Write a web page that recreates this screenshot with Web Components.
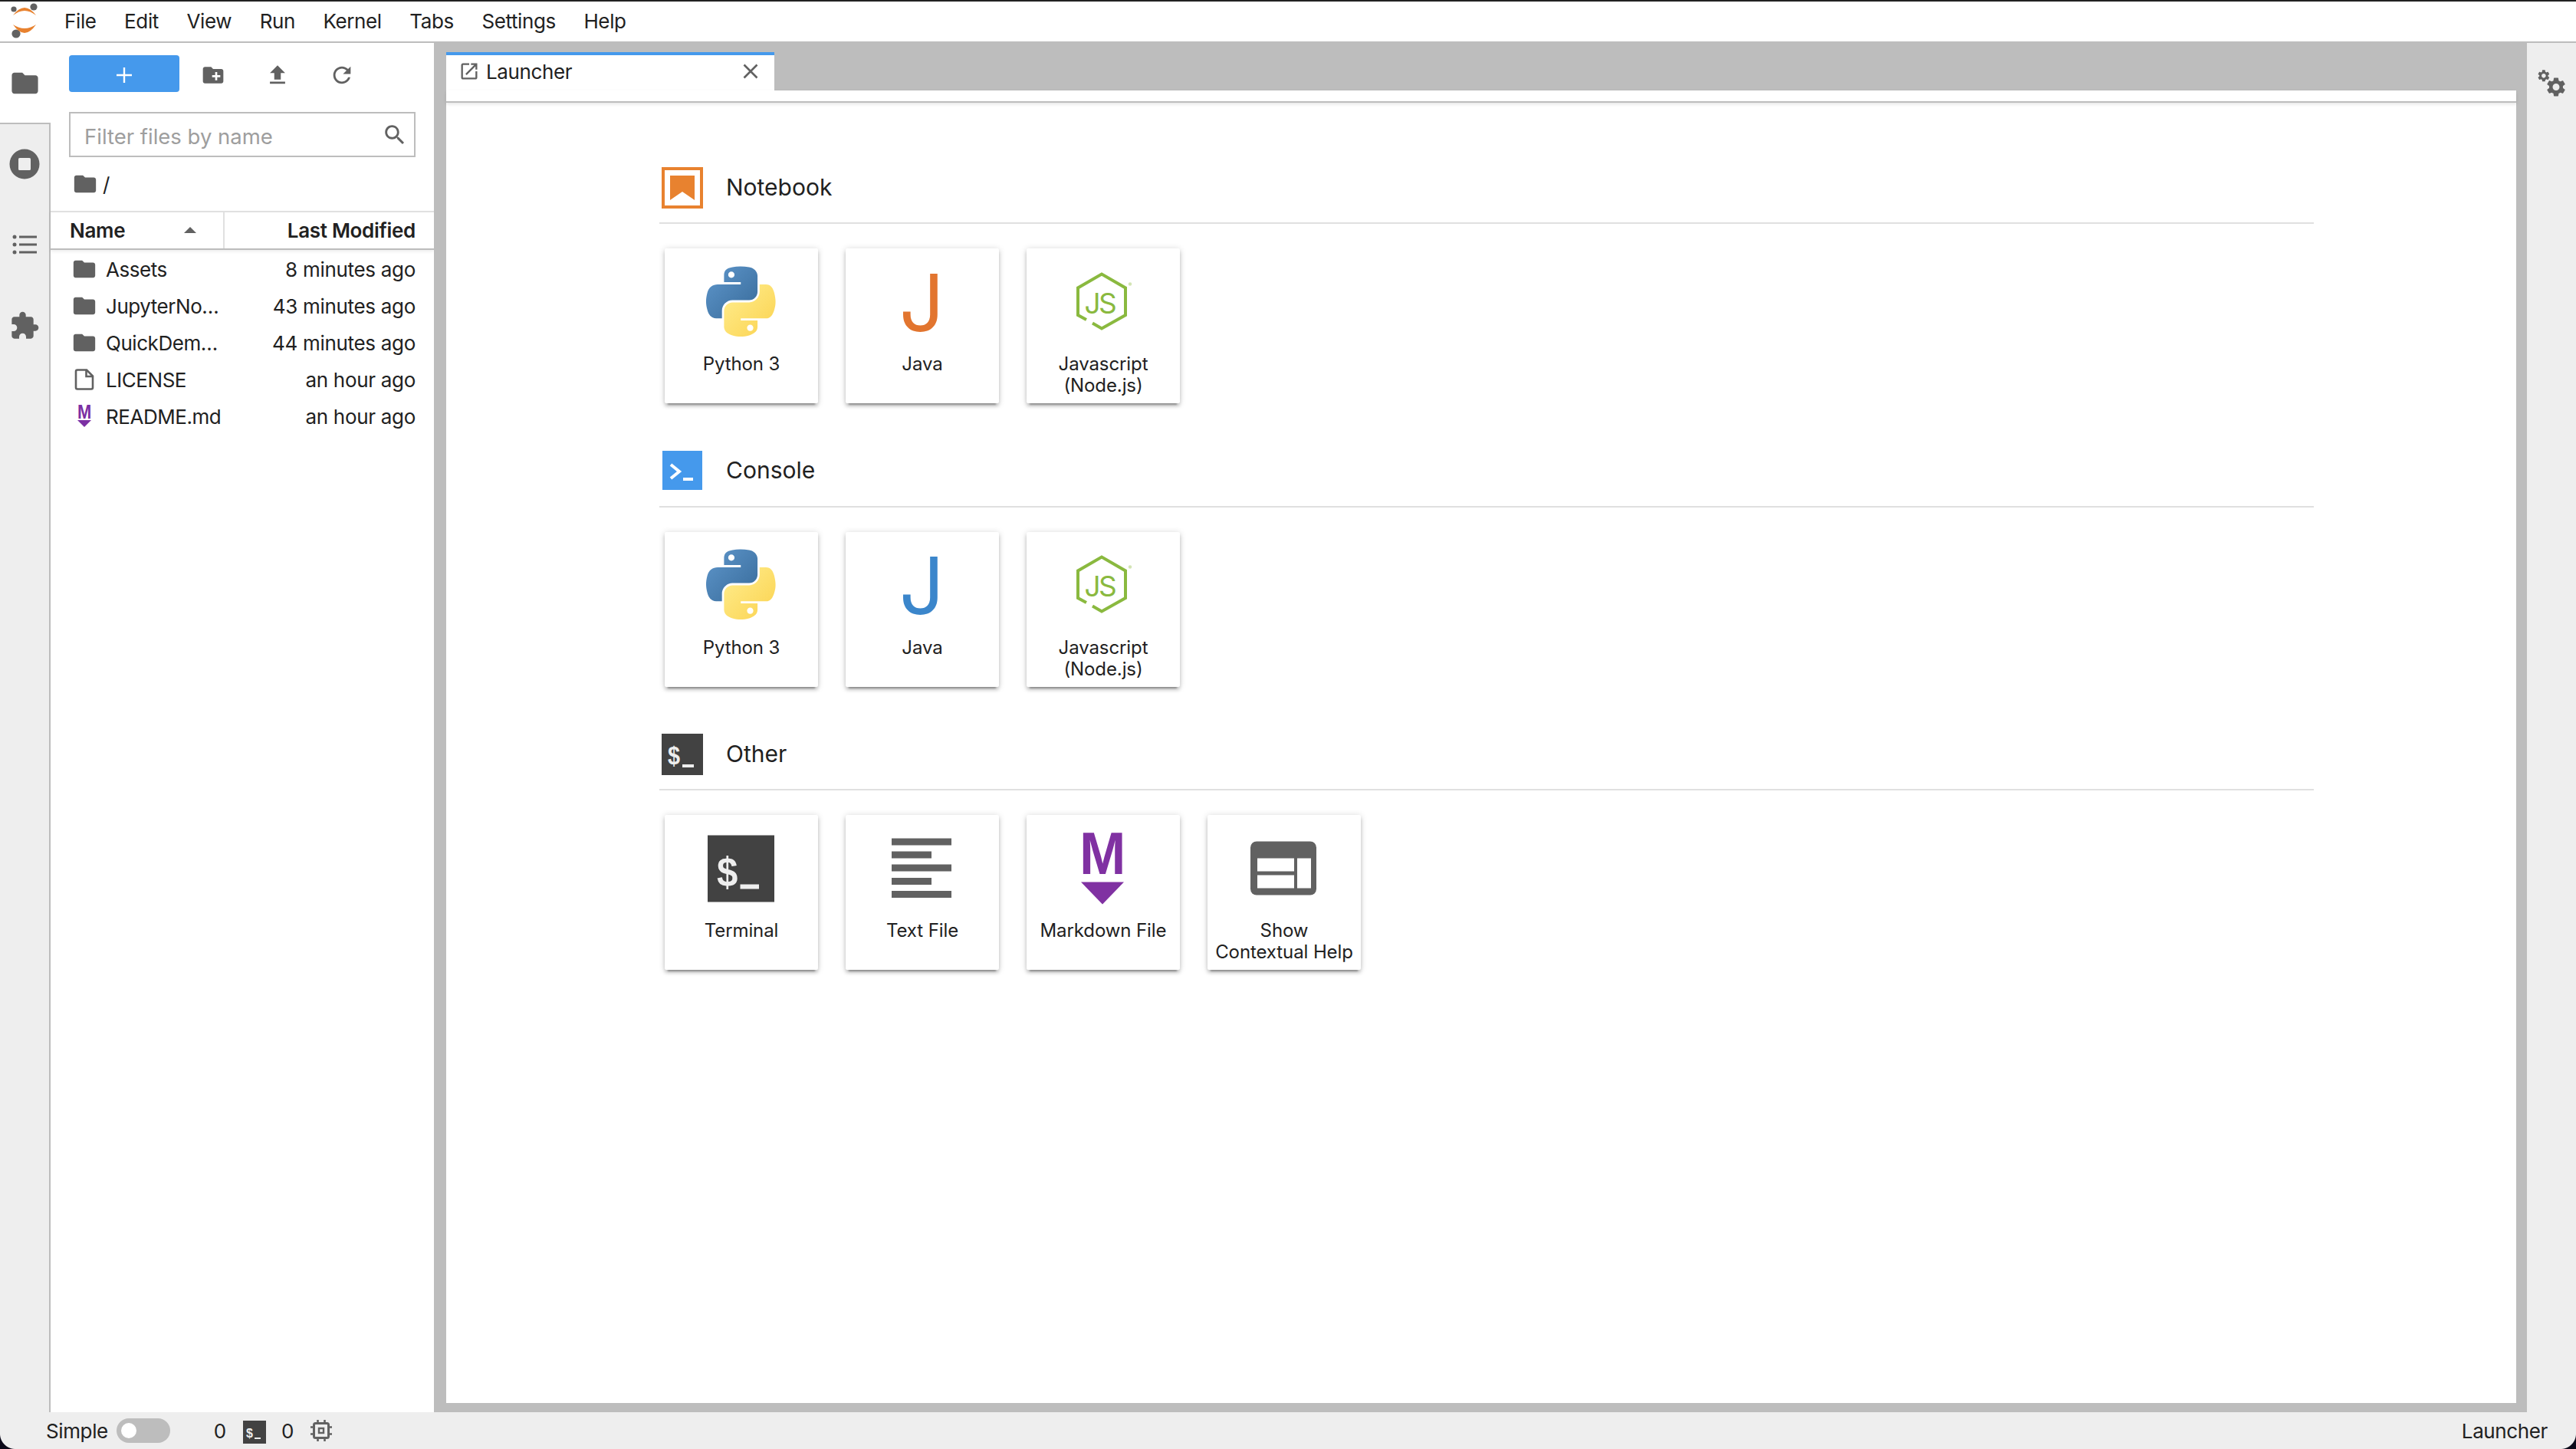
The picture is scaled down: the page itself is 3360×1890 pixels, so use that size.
<!DOCTYPE html>
<html lang="en">
<head>
<meta charset="UTF-8" />
<title>JupyterLab</title>
<style>
	html, body { margin: 0; padding: 0; background: #fff; }
	body { font-family: Inter, "Liberation Sans", sans-serif; color: #212121; letter-spacing: -.38px; }
</style>
</head>
<body>
<jl-app>
	<jl-menubar slot="top">
		<jl-menu-item>File</jl-menu-item>
		<jl-menu-item>Edit</jl-menu-item>
		<jl-menu-item>View</jl-menu-item>
		<jl-menu-item>Run</jl-menu-item>
		<jl-menu-item>Kernel</jl-menu-item>
		<jl-menu-item>Tabs</jl-menu-item>
		<jl-menu-item>Settings</jl-menu-item>
		<jl-menu-item>Help</jl-menu-item>
	</jl-menubar>

	<jl-left-rail slot="left"></jl-left-rail>

	<jl-filebrowser slot="left">
		<jl-file-row icon="folder" name="Assets" modified="8 minutes ago"></jl-file-row>
		<jl-file-row icon="folder" name="JupyterNo…" modified="43 minutes ago"></jl-file-row>
		<jl-file-row icon="folder" name="QuickDem…" modified="44 minutes ago"></jl-file-row>
		<jl-file-row icon="file" name="LICENSE" modified="an hour ago"></jl-file-row>
		<jl-file-row icon="mdsmall" name="README.md" modified="an hour ago"></jl-file-row>
	</jl-filebrowser>

	<jl-dock slot="center">
		<jl-section heading="Notebook" icon="hnotebook">
			<jl-card icon="python">Python 3</jl-card>
			<jl-card icon="javaorange">Java</jl-card>
			<jl-card icon="nodejs">Javascript<br />(Node.js)</jl-card>
		</jl-section>
		<jl-section heading="Console" icon="hconsole">
			<jl-card icon="python">Python 3</jl-card>
			<jl-card icon="javablue">Java</jl-card>
			<jl-card icon="nodejs">Javascript<br />(Node.js)</jl-card>
		</jl-section>
		<jl-section heading="Other" icon="hterminal">
			<jl-card icon="terminal">Terminal</jl-card>
			<jl-card icon="textfile">Text File</jl-card>
			<jl-card icon="markdown">Markdown File</jl-card>
			<jl-card icon="help">Show<br />Contextual Help</jl-card>
		</jl-section>
	</jl-dock>

	<jl-right-rail slot="right"></jl-right-rail>

	<jl-statusbar slot="bottom"></jl-statusbar>
</jl-app>

<script>
const GREY = '#616161';

// every icon lives in its own shadow root, so gradient ids can't clash
const ICONS = {
	logo: `<svg viewBox="0 0 64 52"><circle cx="18" cy="12" r="3.6" fill="#616161"/><circle cx="44" cy="9" r="4.6" fill="#616161"/><circle cx="21" cy="44" r="5.6" fill="#616161"/><path d="M17 20Q32 0 47 20Q32 8 17 20Z" fill="#e8822f"/><path d="M17 32Q32 54 47 32Q32 42 17 32Z" fill="#e8822f"/></svg>`,
	folder: `<svg viewBox="0 0 24 24"><path fill="${GREY}" d="M10 4H4c-1.1 0-1.99.9-1.99 2L2 18c0 1.1.9 2 2 2h16c1.1 0 2-.9 2-2V8c0-1.1-.9-2-2-2h-8l-2-2z"/></svg>`,
	newfolder: `<svg viewBox="0 0 24 24"><path fill="${GREY}" d="M20 6h-8l-2-2H4c-1.11 0-1.99.89-1.99 2L2 18c0 1.11.89 2 2 2h16c1.11 0 2-.89 2-2V8c0-1.11-.89-2-2-2zm-1 8h-3v3h-2v-3h-3v-2h3V9h2v3h3v2z"/></svg>`,
	upload: `<svg viewBox="0 0 24 24"><path fill="${GREY}" d="M9 16h6v-6h4l-7-7-7 7h4zm-4 2h14v2H5z"/></svg>`,
	refresh: `<svg viewBox="0 0 24 24"><path fill="${GREY}" d="M17.65 6.35C16.2 4.9 14.21 4 12 4c-4.42 0-7.99 3.58-7.99 8s3.57 8 7.99 8c3.73 0 6.84-2.55 7.73-6h-2.08c-.82 2.33-3.04 4-5.65 4-3.31 0-6-2.69-6-6s2.69-6 6-6c1.66 0 3.14.69 4.22 1.78L13 11h7V4l-2.35 2.35z"/></svg>`,
	search: `<svg viewBox="0 0 24 24"><path fill="${GREY}" d="M15.5 14h-.79l-.28-.27C15.41 12.59 16 11.11 16 9.5 16 5.91 13.09 3 9.5 3S3 5.91 3 9.5 5.91 16 9.5 16c1.61 0 3.09-.59 4.23-1.57l.27.28v.79l5 4.99L20.49 19l-4.99-5zm-6 0C7.01 14 5 11.99 5 9.5S7.01 5 9.5 5 14 7.01 14 9.5 11.99 14 9.5 14z"/></svg>`,
	launcher: `<svg viewBox="0 0 24 24"><path fill="${GREY}" d="M19 19H5V5h7V3H5c-1.11 0-2 .9-2 2v14c0 1.1.89 2 2 2h14c1.1 0 2-.9 2-2v-7h-2v7zM14 3v2h3.59l-9.83 9.83 1.41 1.41L19 6.41V10h2V3h-7z"/></svg>`,
	close: `<svg viewBox="0 0 24 24"><path d="M3.5 3.5L20.5 20.5M20.5 3.5L3.5 20.5" stroke="${GREY}" stroke-width="2.6" fill="none"/></svg>`,
	stop: `<svg viewBox="0 0 40 40"><path fill="${GREY}" fill-rule="evenodd" d="M20 .5a19.5 19.5 0 1 0 0 39a19.5 19.5 0 1 0 0-39zM13.5 12h13a1.5 1.5 0 0 1 1.5 1.5v13a1.5 1.5 0 0 1-1.5 1.5h-13a1.5 1.5 0 0 1-1.5-1.5v-13a1.5 1.5 0 0 1 1.5-1.5z"/></svg>`,
	list: `<svg viewBox="0 0 40 40"><g fill="${GREY}"><circle cx="7" cy="10" r="2.5"/><circle cx="7" cy="20" r="2.5"/><circle cx="7" cy="30" r="2.5"/><rect x="13" y="8.5" width="23" height="3"/><rect x="13" y="18.5" width="23" height="3"/><rect x="13" y="28.5" width="23" height="3"/></g></svg>`,
	puzzle: `<svg viewBox="0 0 24 24"><path fill="${GREY}" d="M20.5 11H19V7c0-1.1-.9-2-2-2h-4V3.5C13 2.12 11.88 1 10.5 1S8 2.12 8 3.5V5H4c-1.1 0-1.99.9-1.99 2v3.8H3.5c1.49 0 2.7 1.21 2.7 2.7s-1.21 2.7-2.7 2.7H2V20c0 1.1.9 2 2 2h3.8v-1.5c0-1.49 1.21-2.7 2.7-2.7 1.49 0 2.7 1.21 2.7 2.7V22H17c1.1 0 2-.9 2-2v-4h1.5c1.38 0 2.5-1.12 2.5-2.5S21.88 11 20.5 11z"/></svg>`,
	gears: `<svg viewBox="0 0 48 48"><defs><path id="g" fill="${GREY}" d="M19.14 12.94c.04-.3.06-.61.06-.94 0-.32-.02-.64-.07-.94l2.03-1.58a.49.49 0 0 0 .12-.61l-1.92-3.32a.488.488 0 0 0-.59-.22l-2.39.96c-.5-.38-1.03-.7-1.62-.94l-.36-2.54a.484.484 0 0 0-.48-.41h-3.84c-.24 0-.43.17-.47.41l-.36 2.54c-.59.24-1.13.57-1.62.94l-2.39-.96c-.22-.08-.47 0-.59.22L2.74 8.87c-.12.21-.08.47.12.61l2.03 1.58c-.05.3-.09.63-.09.94s.02.64.07.94l-2.03 1.58a.49.49 0 0 0-.12.61l1.92 3.32c.12.22.37.29.59.22l2.39-.96c.5.38 1.03.7 1.62.94l.36 2.54c.05.24.24.41.48.41h3.84c.24 0 .44-.17.47-.41l.36-2.54c.59-.24 1.13-.56 1.62-.94l2.39.96c.22.08.47 0 .59-.22l1.92-3.32c.12-.22.07-.47-.12-.61l-2.01-1.58zM12 15.6c-1.98 0-3.6-1.62-3.6-3.6s1.62-3.6 3.6-3.6 3.6 1.62 3.6 3.6-1.62 3.6-3.6 3.6z"/></defs><use href="#g" transform="translate(4.5 5.5) scale(.78)"/><use href="#g" transform="translate(15 14.5) scale(1.25)"/></svg>`,
	file: `<svg viewBox="0 0 34 34"><g fill="none" stroke="${GREY}" stroke-width="2.6"><path d="M6 6.5a2 2 0 0 1 2-2H20L28 12.5V27.5a2 2 0 0 1-2 2H8a2 2 0 0 1-2-2Z"/><path d="M19.5 4.5V13H28"/></g></svg>`,
	mdsmall: `<svg viewBox="0 0 34 34"><text x="8" y="20" font-family="Liberation Sans" font-weight="700" font-size="25" fill="#7b2fa3" textLength="18" lengthAdjust="spacingAndGlyphs">M</text><path d="M8 22H26L17 31Z" fill="#7b2fa3"/></svg>`,
	hnotebook: `<svg viewBox="0 0 54 54"><rect x="2" y="2" width="50" height="50" fill="#fff" stroke="#e8822f" stroke-width="4"/><path d="M11 11H43V43L27 32L11 43Z" fill="#e8822f"/></svg>`,
	hconsole: `<svg viewBox="0 0 54 54"><rect x="1" y="0" width="52" height="51" fill="#4599ec"/><path d="M12 18L23 27L12 36" fill="none" stroke="#fff" stroke-width="4"/><rect x="28" y="35" width="13" height="4" fill="#fff"/></svg>`,
	hterminal: `<svg viewBox="0 0 54 54"><rect width="54" height="54" fill="#424242"/><text x="8" y="40" font-family="Liberation Sans" font-weight="700" font-size="33" fill="#eee" textLength="16" lengthAdjust="spacingAndGlyphs">$</text><rect x="27" y="40" width="15" height="4" fill="#eee"/></svg>`,
	python: `<svg viewBox="-6 -6.5 104 104"><defs>
		<linearGradient id="pb" x1="0" y1="0" x2="1" y2="1"><stop offset="0" stop-color="#5f97cc"/><stop offset="1" stop-color="#376a99"/></linearGradient>
		<linearGradient id="py" x1="0" y1="0" x2="1" y2="1"><stop offset="0" stop-color="#ffee90"/><stop offset="1" stop-color="#fbd24e"/></linearGradient>
	</defs><g transform="scale(.815)">
		<path fill="url(#pb)" d="M54.9 0C50.3 0 46 .4 42.1 1.1C30.8 3.1 28.7 7.3 28.7 15V25.3H55.5V28.7H18.6C10.8 28.7 4 33.3 1.9 42.3C-.6 52.5-.7 58.8 1.9 69.4C3.8 77.4 8.3 83 16.1 83H25.4V70.8C25.4 61.9 33 54.1 42.1 54.1H68.9C76.3 54.1 82.3 48 82.3 40.5V15C82.3 7.8 76.2 2.3 68.9 1.1C64.3.3 59.5 0 54.9 0ZM40.4 8.2C43.2 8.2 45.5 10.5 45.5 13.3C45.5 16.2 43.2 18.4 40.4 18.4C37.6 18.4 35.4 16.2 35.4 13.3C35.4 10.5 37.6 8.2 40.4 8.2Z"/>
		<path fill="url(#py)" d="M85.6 28.7V40.6C85.6 49.8 77.8 57.6 68.9 57.6H42.1C34.8 57.6 28.7 63.8 28.7 71.2V96.7C28.7 104 35 108.3 42.1 110.3C50.6 112.8 58.7 113.3 68.9 110.3C75.6 108.4 82.3 104.5 82.3 96.7V86.5H55.5V83.1H95.7C103.5 83.1 106.4 77.7 109.1 69.5C111.9 61.1 111.8 53 109.1 42.3C107.2 34.5 103.5 28.7 95.7 28.7ZM70.6 93.3C73.4 93.3 75.6 95.6 75.6 98.4C75.6 101.2 73.4 103.5 70.6 103.5C67.8 103.5 65.5 101.2 65.5 98.4C65.5 95.6 67.8 93.3 70.6 93.3Z"/>
	</g></svg>`,
	javaorange: `<svg viewBox="0 0 104 104"><text x="22" y="90.5" font-family="Inter" font-weight="400" font-size="103" fill="#e2752f">J</text></svg>`,
	javablue: `<svg viewBox="0 0 104 104"><text x="22" y="90.5" font-family="Inter" font-weight="400" font-size="103" fill="#3b86cb">J</text></svg>`,
	nodejs: `<svg viewBox="0 0 104 104"><path fill="none" stroke="#8ab93f" stroke-width="4" d="M38 80.5L50 87.5L81 70V34.5L50 16.5L19 34.5V70L30 76"/><text x="27.5 46" y="68" font-family="Inter" font-weight="400" font-size="37" fill="#8ab93f">JS</text><circle cx="87" cy="29.5" r="2.2" fill="#d3e4b4"/></svg>`,
	terminal: `<svg viewBox="0 0 104 104"><rect x="8" y="9.5" width="87" height="87" fill="#424242"/><text x="20" y="76" font-family="Liberation Sans" font-weight="700" font-size="54" fill="#eee" textLength="27" lengthAdjust="spacingAndGlyphs">$</text><rect x="50.5" y="73.5" width="24.5" height="6" fill="#eee"/></svg>`,
	textfile: `<svg viewBox="0 0 104 104"><g fill="${GREY}"><rect x="12" y="13.5" width="78" height="9"/><rect x="12" y="30.5" width="52" height="9"/><rect x="12" y="47.5" width="78" height="9"/><rect x="12" y="65" width="52" height="9"/><rect x="12" y="82" width="78" height="9"/></g></svg>`,
	markdown: `<svg viewBox="0 0 104 104"><text x="21" y="59.5" font-family="Liberation Sans" font-weight="700" font-size="77" fill="#8031a2" textLength="60" lengthAdjust="spacingAndGlyphs">M</text><path d="M23 70.5H79L51 99.5Z" fill="#8031a2"/></svg>`,
	help: `<svg viewBox="0 0 104 104"><rect x="8" y="17.5" width="86" height="70" rx="8" fill="${GREY}"/><g fill="#fff"><rect x="17" y="39.5" width="48" height="17"/><rect x="17" y="61.5" width="48" height="17"/><rect x="69" y="39.5" width="18" height="39"/></g></svg>`,
	terminalsmall: `<svg viewBox="0 0 30 30"><rect width="30" height="30" fill="#424242"/><text x="4" y="22" font-family="Liberation Sans" font-weight="700" font-size="17" fill="#eee" textLength="8.5" lengthAdjust="spacingAndGlyphs">$</text><rect x="15" y="22" width="8" height="2" fill="#eee"/></svg>`,
	chip: `<svg viewBox="0 0 28 28"><g fill="none" stroke="${GREY}" stroke-width="3"><rect x="4.5" y="4.5" width="19" height="19" rx="2"/><rect x="11" y="11" width="6" height="6" stroke-width="2.4"/><path d="M9.5 0V4M18.5 0V4M9.5 24V28M18.5 24V28M0 9.5H4M0 18.5H4M24 9.5H28M24 18.5H28" stroke-width="2.6"/></g></svg>`
};

class JlIcon extends HTMLElement {
	static get observedAttributes() {
		return ['name', 'size'];
	}

	constructor() {
		super();
		this.attachShadow({ mode: 'open' });
	}

	connectedCallback() {
		this.render();
	}

	attributeChangedCallback() {
		this.render();
	}

	render() {
		const size = this.getAttribute('size') || 24;
		this.shadowRoot.innerHTML = `
		<style>
			:host { display: block; width: ${size}px; height: ${size}px; flex: none; }
			svg { display: block; width: 100%; height: 100%; overflow: visible; }
		</style>
		${ICONS[this.getAttribute('name')] || ''}`;
	}
}

class JlApp extends HTMLElement {
	constructor() {
		super();
		this.attachShadow({ mode: 'open' });
		this.shadowRoot.innerHTML = `
		<style>
			:host { display: flex; flex-direction: column; position: relative; height: 1890px; overflow: hidden; background: #eee; }
			.middle { flex: 1; display: flex; min-height: 0; }
			.corner { position: absolute; bottom: 0; width: 20px; height: 20px; }
			.bl { left: 0; background: radial-gradient(circle at 100% 0, transparent 19.5px, #0c0a1a 20.5px); }
			.br { right: 0; background: radial-gradient(circle at 0 0, transparent 19.5px, #0c0a1a 20.5px); }
			::slotted([slot="center"]) { flex: 1; min-width: 0; }
		</style>
		<slot name="top"></slot>
		<div class="middle">
			<slot name="left"></slot>
			<slot name="center"></slot>
			<slot name="right"></slot>
		</div>
		<slot name="bottom"></slot>
		<div class="corner bl"></div>
		<div class="corner br"></div>`;
	}
}

class JlMenubar extends HTMLElement {
	constructor() {
		super();
		this.attachShadow({ mode: 'open' });
		this.shadowRoot.innerHTML = `
		<style>
			:host { display: flex; align-items: center; box-sizing: border-box; height: 56px; background: #fff; border-top: 2px solid #222; border-bottom: 2px solid #bdbdbd; }
			.logo { height: 52px; margin-top: -4px; margin-right: 20px; }
			.items { display: flex; gap: 36.5px; }
		</style>
		<jl-icon class="logo" name="logo" size="52" style="width:64px"></jl-icon>
		<div class="items"><slot></slot></div>`;
	}
}

class JlMenuItem extends HTMLElement {
	constructor() {
		super();
		this.attachShadow({ mode: 'open' });
		this.shadowRoot.innerHTML = `
		<style>
			:host { display: block; font-size: 26px; line-height: 32px; color: #212121; }
		</style>
		<slot></slot>`;
	}
}

class JlLeftRail extends HTMLElement {
	constructor() {
		super();
		this.attachShadow({ mode: 'open' });
		this.shadowRoot.innerHTML = `
		<style>
			:host { display: flex; flex-direction: column; width: 66px; box-sizing: border-box; background: #eee; border-right: 2px solid #bdbdbd; flex: none; }
			.btn { display: flex; align-items: center; justify-content: center; height: 106px; box-sizing: border-box; }
			.active { background: #fff; margin-right: -2px; padding-right: 2px; border-bottom: 2px solid #bdbdbd; }
			.active + .btn { height: 104px; }
		</style>
		<div class="btn active"><jl-icon name="folder" size="41"></jl-icon></div>
		<div class="btn"><jl-icon name="stop" size="40"></jl-icon></div>
		<div class="btn"><jl-icon name="list" size="40"></jl-icon></div>
		<div class="btn"><jl-icon name="puzzle" size="40"></jl-icon></div>`;
	}
}

class JlRightRail extends HTMLElement {
	constructor() {
		super();
		this.attachShadow({ mode: 'open' });
		this.shadowRoot.innerHTML = `
		<style>
			:host { display: block; width: 64px; background: #eee; flex: none; padding: 28px 0 0 8px; box-sizing: border-box; }
		</style>
		<jl-icon name="gears" size="48"></jl-icon>`;
	}
}

class JlFilebrowser extends HTMLElement {
	constructor() {
		super();
		this.attachShadow({ mode: 'open' });
		this.shadowRoot.innerHTML = `
		<style>
			:host { display: flex; flex-direction: column; width: 500px; background: #fff; flex: none; }
			.tools { display: flex; align-items: center; height: 48px; margin: 16px 0 26px 24px; }
			.new { display: flex; align-items: center; justify-content: center; width: 144px; height: 48px; margin-right: 2px; padding-top: 4px; box-sizing: border-box; background: #4599ec; border-radius: 4px; }
			.new svg { width: 24px; height: 24px; }
			.tool { display: flex; justify-content: center; width: 84px; padding-top: 4px; }
			.filter { display: flex; align-items: center; justify-content: space-between; box-sizing: border-box; width: 452px; height: 59px; margin-left: 24px; padding: 0 8px 0 18px; border: 2px solid #bdbdbd; font-size: 27.5px; letter-spacing: 0; color: #9e9e9e; }
			.filter span { margin-top: 4px; }
			.crumbs { display: flex; align-items: center; gap: 6px; height: 70px; padding-left: 28px; font-size: 26px; }
			.head { display: flex; height: 47px; border-top: 2px solid #e0e0e0; border-bottom: 2px solid #bdbdbd; font-size: 26px; font-weight: 600; line-height: 47px; letter-spacing: -.3px; box-shadow: 0 2px 4px rgba(0, 0, 0, .08); }
			.name { display: flex; align-items: center; justify-content: space-between; width: 227px; box-sizing: border-box; padding: 0 35px 0 25px; border-right: 2px solid #e0e0e0; }
			.caret { width: 0; height: 0; border: 8px solid transparent; border-top: 0; border-bottom: 8px solid ${GREY}; margin-top: -2px; }
			.mod { flex: 1; text-align: right; padding-right: 24px; }
			.rows { padding-top: 1px; }
		</style>
		<div class="tools">
			<div class="new"><svg viewBox="0 0 24 24"><path d="M12 2V22M2 12H22" stroke="#fff" stroke-width="2.4"/></svg></div>
			<div class="tool"><jl-icon name="newfolder" size="32"></jl-icon></div>
			<div class="tool"><jl-icon name="upload" size="34"></jl-icon></div>
			<div class="tool"><jl-icon name="refresh" size="34"></jl-icon></div>
		</div>
		<div class="filter"><span>Filter files by name</span><jl-icon name="search" size="34"></jl-icon></div>
		<div class="crumbs"><jl-icon name="folder" size="34"></jl-icon><span>/</span></div>
		<div class="head">
			<div class="name"><span>Name</span><span class="caret"></span></div>
			<div class="mod">Last Modified</div>
		</div>
		<div class="rows"><slot></slot></div>`;
	}
}

class JlFileRow extends HTMLElement {
	constructor() {
		super();
		this.attachShadow({ mode: 'open' });
	}

	connectedCallback() {
		this.shadowRoot.innerHTML = `
		<style>
			:host { display: flex; align-items: center; height: 48px; padding: 0 24px 0 27px; font-size: 26px; letter-spacing: -.3px; color: #212121; }
			.label { margin-left: 11px; flex: 1; white-space: nowrap; letter-spacing: -.45px; }
		</style>
		<jl-icon name="${this.getAttribute('icon')}" size="34"></jl-icon>
		<span class="label">${this.getAttribute('name')}</span>
		<span>${this.getAttribute('modified')}</span>`;
	}
}

class JlDock extends HTMLElement {
	constructor() {
		super();
		this.attachShadow({ mode: 'open' });
		this.shadowRoot.innerHTML = `
		<style>
			:host { display: flex; flex-direction: column; background: #bdbdbd; padding: 0 14px 12px 16px; min-width: 0; }
			.tabs { height: 62px; flex: none; padding-top: 12px; box-sizing: border-box; }
			.tab { display: flex; align-items: center; box-sizing: border-box; width: 428px; height: 50px; padding: 0 19px 4px 16px; background: #fff; border-top: 4px solid #4599ec; font-size: 26px; color: #212121; }
			.tab span { flex: 1; margin-left: 8px; }
			.toolbar { height: 14px; flex: none; background: #fff; border-bottom: 2px solid #bdbdbd; box-shadow: 0 2px 4px rgba(0, 0, 0, .1); position: relative; }
			.launcher { flex: 1; background: #fff; padding: 66px 264px 0 278px; }
		</style>
		<div class="tabs">
			<div class="tab">
				<jl-icon name="launcher" size="28"></jl-icon>
				<span>Launcher</span>
				<jl-icon name="close" size="24"></jl-icon>
			</div>
		</div>
		<div class="toolbar"></div>
		<div class="launcher"><slot></slot></div>`;
	}
}

class JlSection extends HTMLElement {
	constructor() {
		super();
		this.attachShadow({ mode: 'open' });
	}

	connectedCallback() {
		this.shadowRoot.innerHTML = `
		<style>
			:host { display: block; margin-bottom: 43.5px; }
			.head { display: flex; align-items: center; gap: 30px; height: 90px; padding-left: 3px; border-bottom: 2px solid #e0e0e0; font-size: 30px; letter-spacing: 0; color: #212121; }
			.head span { margin-top: -3px; }
			.cards { display: flex; gap: 36px; padding: 32px 0 0 7px; }
		</style>
		<div class="head">
			<jl-icon name="${this.getAttribute('icon')}" size="54"></jl-icon>
			<span>${this.getAttribute('heading')}</span>
		</div>
		<div class="cards"><slot></slot></div>`;
	}
}

class JlCard extends HTMLElement {
	constructor() {
		super();
		this.attachShadow({ mode: 'open' });
	}

	connectedCallback() {
		this.shadowRoot.innerHTML = `
		<style>
			:host { display: flex; flex-direction: column; width: 200px; height: 202px; background: #fff; border-radius: 2px; box-shadow: 0 4px 4px rgba(0, 0, 0, .16), 0 6px 2px -4px rgba(0, 0, 0, .28), 0 1px 8px rgba(0, 0, 0, .18); }
			.pic { display: flex; align-items: center; justify-content: center; height: 137px; flex: none; }
			.label { padding: 0 4px; font-size: 24px; line-height: 28px; letter-spacing: -.1px; text-align: center; color: #212121; }
		</style>
		<div class="pic"><jl-icon name="${this.getAttribute('icon')}" size="104"></jl-icon></div>
		<div class="label"><slot></slot></div>`;
	}
}

class JlStatusbar extends HTMLElement {
	constructor() {
		super();
		this.attachShadow({ mode: 'open' });
		this.shadowRoot.innerHTML = `
		<style>
			:host { display: flex; align-items: center; height: 48px; flex: none; padding: 0 37px 0 60px; background: #eee; font-size: 26px; color: #212121; }
			.toggle { width: 70px; height: 32px; margin-left: 11px; border-radius: 16px; background: #bdbdbd; display: flex; align-items: center; padding-left: 6px; box-sizing: border-box; }
			.knob { width: 20px; height: 20px; border-radius: 50%; background: #fff; }
			.zero1 { margin-left: 57px; }
			.term { margin: 4px 0 0 22px; }
			.zero2 { margin-left: 20px; }
			.chip { margin-left: 22px; }
			.end { margin-left: auto; }
		</style>
		<span>Simple</span>
		<div class="toggle"><div class="knob"></div></div>
		<span class="zero1">0</span>
		<jl-icon class="term" name="terminalsmall" size="30"></jl-icon>
		<span class="zero2">0</span>
		<jl-icon class="chip" name="chip" size="28"></jl-icon>
		<span class="end">Launcher</span>`;
	}
}

customElements.define('jl-icon', JlIcon);
customElements.define('jl-app', JlApp);
customElements.define('jl-menubar', JlMenubar);
customElements.define('jl-menu-item', JlMenuItem);
customElements.define('jl-left-rail', JlLeftRail);
customElements.define('jl-right-rail', JlRightRail);
customElements.define('jl-filebrowser', JlFilebrowser);
customElements.define('jl-file-row', JlFileRow);
customElements.define('jl-dock', JlDock);
customElements.define('jl-section', JlSection);
customElements.define('jl-card', JlCard);
customElements.define('jl-statusbar', JlStatusbar);
</script>
</body>
</html>
